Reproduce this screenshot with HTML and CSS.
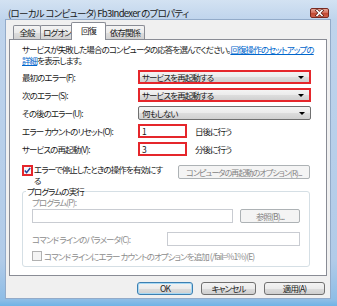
FILE: index.html
```
<!DOCTYPE html>
<html lang="ja">
<head>
    <meta charset="UTF-8">
    <title>Fb3Indexer のプロパティ</title>
    <link rel="stylesheet" href="styles.css">
</head>
<body>
    <div class="window">
        <div class="titlebar">
            <span class="title">(ローカル コンピュータ) Fb3Indexer のプロパティ</span>
            <span class="close-btn">
                <svg width="19" height="10" viewBox="0 0 19 10">
                    <path d="M7 2.5 L12 7.5 M12 2.5 L7 7.5" stroke="#5a1a12" stroke-width="3" stroke-linecap="square"/>
                    <path d="M7 2.5 L12 7.5 M12 2.5 L7 7.5" stroke="#fff" stroke-width="1.6" stroke-linecap="square"/>
                </svg>
            </span>
        </div>
        <div class="client">
            <div class="tabs">
                <div class="tab tab-general">全般</div>
                <div class="tab tab-logon">ログオン</div>
                <div class="tab tab-recovery active">回復</div>
                <div class="tab tab-deps">依存関係</div>
            </div>
            <div class="panel">
                <p class="desc">サービスが失敗した場合のコンピュータの応答を選んでください。<a href="#">回復操作のセットアップの<br>詳細</a>を表示します。</p>
                <div class="rows">
                    <div class="row">
                        <span class="row-label">最初のエラー(F):</span>
                        <div class="select marked">サービスを再起動する<span class="arrow"></span></div>
                    </div>
                    <div class="row">
                        <span class="row-label">次のエラー(S):</span>
                        <div class="select marked">サービスを再起動する<span class="arrow"></span></div>
                    </div>
                    <div class="row">
                        <span class="row-label">その後のエラー(U):</span>
                        <div class="select">何もしない<span class="arrow"></span></div>
                    </div>
                    <div class="row">
                        <span class="row-label">エラー カウントのリセット(O):</span>
                        <div class="textbox marked">1</div>
                        <span class="unit">日後に行う</span>
                    </div>
                    <div class="row">
                        <span class="row-label">サービスの再起動(V):</span>
                        <div class="textbox marked">3</div>
                        <span class="unit">分後に行う</span>
                    </div>
                </div>
                <div class="check-row">
                    <span class="checkbox marked">
                        <svg width="7" height="7" viewBox="0 0 7 7"><path d="M0.8 3.6 L2.6 5.6 L6.2 1" fill="none" stroke="#24489a" stroke-width="1.5"/></svg>
                    </span>
                    <span class="check-label">エラーで停止したときの操作を有効にす<br>る</span>
                    <button class="btn option-btn" disabled>コンピュータの再起動のオプション(R)...</button>
                </div>
                <fieldset class="group">
                    <legend>プログラムの実行</legend>
                    <div class="field-label">プログラム(P):</div>
                    <div class="program-row">
                        <div class="textbox disabled program-input"></div>
                        <button class="btn browse-btn" disabled>参照(B)...</button>
                    </div>
                    <div class="param-row">
                        <span class="param-label">コマンド ラインのパラメータ(C):</span>
                        <div class="textbox disabled param-input"></div>
                    </div>
                    <div class="option-check">
                        <span class="checkbox disabled"></span>
                        <span>コマンド ラインにエラー カウントのオプションを追加 (/fail=%1%)(E)</span>
                    </div>
                </fieldset>
            </div>
            <div class="actions">
                <button class="btn dialog-btn default ok">OK</button>
                <button class="btn dialog-btn cancel">キャンセル</button>
                <button class="btn dialog-btn apply">適用(A)</button>
            </div>
        </div>
    </div>
</body>
</html>
```

FILE: styles.css
```
body {
    margin: 0;
    font-family: "Noto Sans CJK JP", "Noto Sans", sans-serif;
    font-size: 8.5px;
    letter-spacing: -0.9px;
    font-feature-settings: "palt";
    color: #1a1a1a;
    white-space: nowrap;
}
.window {
    width: 337px;
    height: 306px;
    box-sizing: border-box;
    padding: 0 7px 8px 6px;
    display: flex;
    flex-direction: column;
    background: linear-gradient(#d3e2f2 0, #bfd4ec 20px, #b1cbe8 260px, #8ebde6 300px, #6fb3e6 100%);
}
.titlebar {
    height: 20px;
    display: flex;
    align-items: flex-start;
    justify-content: space-between;
}
.title {
    font-size: 9.5px;
    letter-spacing: -0.7px;
    line-height: 12px;
    margin: 7px 0 0 2px;
}
.close-btn {
    width: 19px;
    height: 10px;
    margin: 8px 1px 0 0;
    border: 1px solid #7a2a20;
    border-radius: 2px;
    box-sizing: border-box;
    display: flex;
    align-items: center;
    justify-content: center;
    background: linear-gradient(#e8a89a, #d4705d 45%, #c24a33 55%, #d0604a);
}
.close-btn svg {
    margin: -1px;
}
.client {
    flex: 1;
    background: #f0f0f0;
    padding: 2px 3px 0;
    outline: 1px solid #93abc9;
}
.tabs {
    display: flex;
    align-items: flex-end;
    height: 17px;
    padding-left: 4px;
}
.tab {
    height: 14px;
    line-height: 13px;
    text-align: center;
    box-sizing: border-box;
    border: 1px solid #898c95;
    border-bottom: none;
    border-radius: 2px 2px 0 0;
    margin-right: -1px;
    background: linear-gradient(#f4f4f4, #ebebeb 50%, #dedede 51%, #d2d2d2);
}
.tab-general {
    width: 28px;
}
.tab-logon {
    width: 34px;
}
.tab-recovery {
    width: 35px;
}
.tab-deps {
    width: 40px;
}
.tab.active {
    position: relative;
    z-index: 2;
    height: 18px;
    line-height: 14px;
    background: #fff;
    margin: 0 -1px -1px -2px;
}
.panel {
    height: 237px;
    box-sizing: border-box;
    border: 1px solid #898c95;
    background: #fff;
    padding: 4px 15px 0 12px;
}
.desc {
    margin: 0;
    line-height: 11px;
}
.desc a {
    color: #0066cc;
}
.rows {
    margin-top: 4px;
    display: flex;
    flex-direction: column;
    gap: 4px;
}
.row {
    display: flex;
    align-items: center;
    height: 14px;
}
.row-label {
    width: 116px;
}
.select {
    flex: 1;
    height: 14px;
    box-sizing: border-box;
    border: 1px solid #707070;
    border-radius: 2px;
    padding: 0 5px 0 3px;
    display: flex;
    align-items: center;
    background: linear-gradient(#f3f3f3, #ebebeb 50%, #dddddd 51%, #d0d0d0);
}
.select.marked {
    border: 2px solid #e5262b;
    border-radius: 0;
    padding-left: 2px;
}
.arrow {
    margin-left: auto;
    border-left: 3px solid transparent;
    border-right: 3px solid transparent;
    border-top: 3px solid #000;
}
.textbox {
    width: 49px;
    height: 14px;
    box-sizing: border-box;
    border: 1px solid #abadb3;
    background: #fff;
    padding-left: 2px;
    line-height: 10px;
}
.textbox.marked {
    border: 2px solid #e5262b;
}
.textbox.disabled {
    border-color: #c9ccd2;
}
.unit {
    margin-left: 8px;
}
.check-row {
    display: flex;
    align-items: flex-start;
    margin-top: 8px;
}
.checkbox {
    width: 10px;
    height: 10px;
    box-sizing: border-box;
    border: 1px solid #8e8f8f;
    background: linear-gradient(135deg, #dcdcdc, #fbfbfb);
    display: flex;
    align-items: center;
    justify-content: center;
    flex-shrink: 0;
}
.checkbox.marked {
    width: 11px;
    height: 11px;
    margin-top: 1px;
    border: 2px solid #e5262b;
    margin-right: 1px;
    background: #f4f6fa;
}
.checkbox.disabled {
    border-color: #b1b1b1;
    background: #f4f4f4;
    margin-right: 2px;
}
.check-label {
    line-height: 11px;
}
.btn {
    font-family: inherit;
    font-size: 8.5px;
    letter-spacing: -0.9px;
    font-feature-settings: "palt";
    white-space: nowrap;
    height: 14px;
    padding: 0;
    box-sizing: border-box;
    border: 1px solid #707070;
    border-radius: 2px;
    color: #1a1a1a;
    background: linear-gradient(#f3f3f3, #ebebeb 50%, #dddddd 51%, #cfcfcf);
    line-height: 11px;
}
.btn:disabled {
    border-color: #adb2b5;
    background: #f4f4f4;
    color: #838383;
}
.option-btn {
    margin: 1px 1px 0 auto;
    width: 132px;
    font-size: 8px;
    letter-spacing: -0.9px;
}
.group {
    margin: 0 1px 0 0;
    padding: 0 9px 5px;
    border: 1px solid #d5dfe5;
    border-radius: 3px;
    color: #8d8d8d;
}
.group legend {
    color: #1a1a1a;
    line-height: 11px;
    padding: 0 1px;
    margin-left: -6px;
}
.field-label {
    line-height: 10px;
}
.program-row {
    display: flex;
    margin-top: 2px;
}
.program-input {
    width: 201px;
}
.browse-btn {
    width: 60px;
    margin-left: 7px;
}
.param-row {
    display: flex;
    align-items: center;
    margin-top: 9px;
}
.param-label {
    width: 135px;
}
.param-input {
    flex: 1;
}
.option-check {
    display: flex;
    align-items: center;
    margin-top: 5px;
    line-height: 10px;
}
.actions {
    display: flex;
    justify-content: flex-end;
    gap: 8px;
    margin-top: 6px;
    padding-right: 2px;
}
.dialog-btn {
    height: 13px;
    border-radius: 3px;
}
.dialog-btn.default {
    border-color: #3c7fb1;
    box-shadow: inset 0 0 0 1px #a6d8f4;
}
.ok {
    width: 56px;
}
.cancel {
    width: 55px;
}
.apply {
    width: 61px;
}
```
